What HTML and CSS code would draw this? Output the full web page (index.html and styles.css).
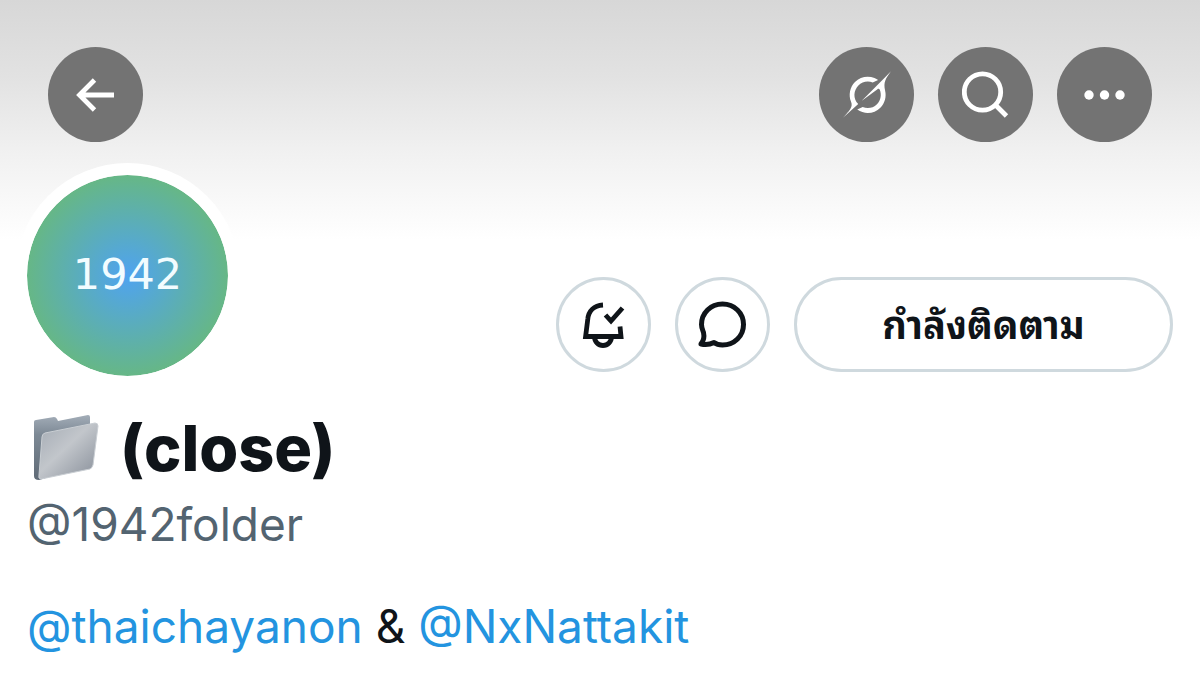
FILE: index.html
```html
<!DOCTYPE html>
<html lang="th">
<head>
    <meta charset="UTF-8">
    <meta name="viewport" content="width=device-width, initial-scale=1">
    <title>(close) @1942folder</title>
    <link rel="stylesheet" href="styles.css">
</head>
<body>
    <header class="cover">
        <button class="round-btn" aria-label="Back">
            <svg width="40" height="36" viewBox="0 0 40 36" fill="none" stroke="#fff" stroke-width="4.8">
                <path d="M38 18H5M18.500 3L3.500 18l15 15"/>
            </svg>
        </button>
        <div class="cover-tools">
            <button class="round-btn" aria-label="Grok">
                <svg width="48" height="47" viewBox="0 0 33 32" fill="#fff">
                    <path d="M12.745 20.54l10.97-8.19c.539-.4 1.307-.244 1.564.38 1.349 3.288.746 7.241-1.938 9.955-2.683 2.714-6.417 3.31-9.83 1.954l-3.728 1.745c5.347 3.697 11.84 2.782 15.898-1.324 3.219-3.255 4.216-7.692 3.284-11.693l.008.009c-1.351-5.878.332-8.227 3.782-13.031L33 0l-4.54 4.59v-.014L12.743 20.544m-2.263 1.987c-3.837-3.707-3.175-9.446.1-12.755 2.42-2.449 6.388-3.448 9.852-1.979l3.72-1.737c-.67-.49-1.53-1.017-2.515-1.387-4.455-1.854-9.789-.931-13.41 2.728-3.483 3.523-4.579 8.94-2.697 13.561 1.405 3.454-.899 5.898-3.22 8.364C1.49 30.2.666 31.074 0 32l10.478-9.466"/>
                </svg>
            </button>
            <button class="round-btn" aria-label="Search">
                <svg width="48" height="48" viewBox="0 0 48 48" fill="none" stroke="#fff" stroke-width="4.8">
                    <circle cx="20.500" cy="21" r="18.200"/>
                    <path d="M33 33.500L44.500 45"/>
                </svg>
            </button>
            <button class="round-btn" aria-label="More">
                <svg width="42" height="10" viewBox="0 0 42 10" fill="#fff">
                    <circle cx="5" cy="5" r="4.7"/>
                    <circle cx="20.500" cy="5" r="4.7"/>
                    <circle cx="36" cy="5" r="4.7"/>
                </svg>
            </button>
        </div>
    </header>

    <main class="profile">
        <div class="profile-top">
            <div class="avatar">1942</div>
            <div class="actions">
                <button class="outline-btn" aria-label="Notifications">
                    <svg width="44" height="48" viewBox="0 0 44 48" fill="none" stroke="#0f1419" stroke-width="4.8">
                        <path d="M21 4C12 4.500 6.500 10 5.800 18L3.600 35.500H39L38 25.500"/>
                        <path d="M12.500 36a8.500 8.500 0 0 0 17 0"/>
                        <path d="M23.500 14l5.500 6L40.500 7"/>
                    </svg>
                </button>
                <button class="outline-btn" aria-label="Message">
                    <svg width="50" height="48" viewBox="0 0 50 48" fill="none" stroke="#0f1419" stroke-width="5" stroke-linejoin="round">
                        <path d="M24.500 3C36.500 3 45.500 12 45.500 23.500S36.500 44 24.500 44C20.500 44 18.500 43.500 16 41.500C12 43.500 8 44 3 43C6 39.500 6.500 36 5.500 31.500C4.500 29 3.500 27 3.500 23.500C3.500 12 12.500 3 24.500 3Z"/>
                    </svg>
                </button>
                <button class="outline-btn follow-btn">กำลังติดตาม</button>
            </div>
        </div>

        <h1 class="name">
            <svg class="folder" width="66" height="66" viewBox="0 0 66 66" role="img" aria-label="Folder">
                <defs>
                    <linearGradient id="back" x1="0" y1="0" x2="0" y2="1">
                        <stop offset="0" stop-color="#a3adb8"/>
                        <stop offset="0.300" stop-color="#7d8995"/>
                        <stop offset="1" stop-color="#5f6a76"/>
                    </linearGradient>
                    <linearGradient id="front" x1="0" y1="0" x2="1" y2="1">
                        <stop offset="0" stop-color="#a4abb4"/>
                        <stop offset="0.450" stop-color="#c2c6cb"/>
                        <stop offset="1" stop-color="#868d98"/>
                    </linearGradient>
                </defs>
                <path d="M1 7Q1 5 3 5L21 2Q23 2 24 4L25 6L55 0Q57 0 57 2V50L6 65Q1 65 1 61Z" fill="url(#back)"/>
                <path d="M9 22Q9 19 12 18L62 8Q65 8 65 11L60 50Q59 53 57 54L8 64Q5 64 6 60Z" fill="url(#front)" stroke="#c9ced3"/>
            </svg>
            <span>(close)</span>
        </h1>
        <div class="handle">@1942folder</div>
        <p class="bio"><a href="#">@thaichayanon</a> &amp; <a href="#">@NxNattakit</a></p>
    </main>
</body>
</html>
```
FILE: styles.css
```css
* {
    box-sizing: border-box;
}
body {
    margin: 0;
    background: #fff;
    color: #0f1419;
    font-family: Inter, sans-serif;
}
button {
    display: flex;
    align-items: center;
    justify-content: center;
    padding: 0;
    font-family: inherit;
    color: inherit;
    cursor: pointer;
}
.cover {
    display: flex;
    align-items: flex-start;
    justify-content: space-between;
    height: 240px;
    padding: 47px 48px 0;
    background: linear-gradient(#d7d7d7, #e2e2e2 32%, #f1f1f1 64%, #fff);
}
.cover-tools,
.actions {
    display: flex;
    gap: 24px;
}
.round-btn {
    width: 95px;
    height: 95px;
    border: none;
    border-radius: 50%;
    background: #737373;
}
.profile {
    padding: 0 27px;
}
.profile-top {
    display: flex;
    align-items: flex-end;
    justify-content: space-between;
    margin: -77px 0 0 -12px;
}
.avatar {
    display: flex;
    align-items: center;
    justify-content: center;
    width: 225px;
    height: 225px;
    border: 12px solid #fff;
    border-radius: 50%;
    background: radial-gradient(circle closest-side, #4fa3f0, #66b786) padding-box;
    color: #f2fcff;
    font-family: "DejaVu Sans", sans-serif;
    font-size: 43px;
    line-height: 48px;
    padding-bottom: 4px;
}
.actions {
    padding-bottom: 16px;
}
.outline-btn {
    width: 95px;
    height: 95px;
    border: 3px solid #cfd9de;
    border-radius: 48px;
    background: #fff;
}
.follow-btn {
    width: 379px;
    padding-bottom: 6px;
    font-family: "Noto Sans Thai Looped", Loma, Garuda, Waree, "Noto Sans Thai", sans-serif;
    font-size: 38px;
    font-weight: 700;
}
.name {
    display: flex;
    align-items: center;
    gap: 21px;
    margin: 20px 0 0;
    padding-left: 6px;
    font-size: 63px;
    font-weight: 800;
    line-height: 80px;
}
.handle {
    color: #536471;
    font-size: 46px;
    line-height: 72px;
}
.bio {
    margin: 34px 0 0;
    font-size: 46px;
    line-height: 64px;
}
.bio a {
    color: #2394e0;
    text-decoration: none;
}
```
